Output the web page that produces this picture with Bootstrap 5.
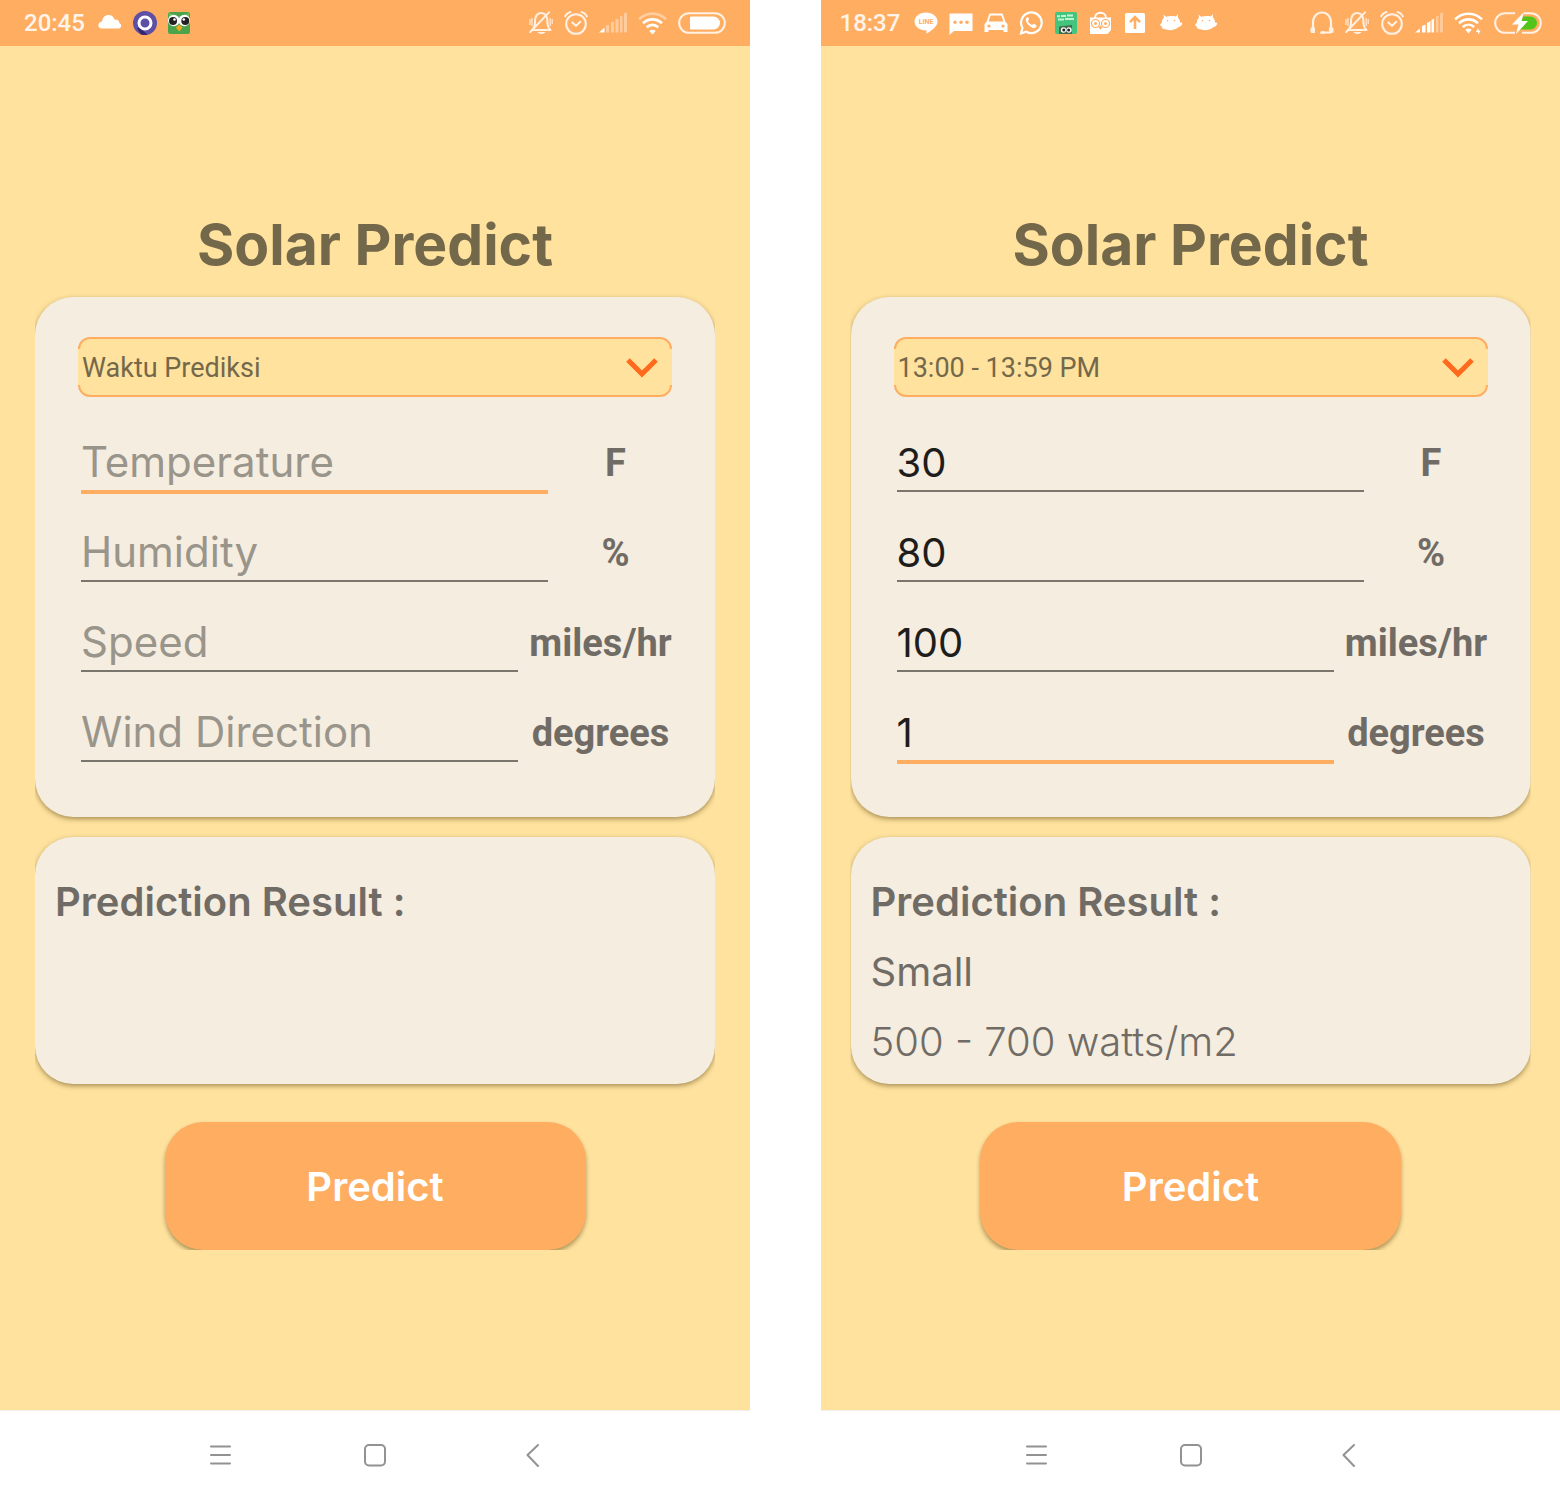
<!DOCTYPE html>
<html lang="id">
<head>
<meta charset="utf-8">
<meta name="viewport" content="width=device-width, initial-scale=1">
<title>Solar Predict</title>
<link href="https://cdn.jsdelivr.net/npm/bootstrap@5.3.0/dist/css/bootstrap.min.css" rel="stylesheet">
<style>
:root{--sun:#ffe29e;--orange:#ffad61;--panel:#f5ede0;--ink:#706c65}
body{background:#fff;font-family:Inter,"Open Sans",sans-serif}
.screens{column-gap:71px}
.phone{flex:739 1 0;min-width:0;background:var(--sun)}
.phone-wide{flex-grow:750}
.statusbar{background:var(--orange);height:46px;color:#fff}
.status-inner{width:100%;max-width:702px}
.status-icons{gap:11px}
.clock{min-width:63px;font:500 24px/28px Roboto,sans-serif;color:#fff4ea}
.app{padding:167px 29px 40px}
.app-title{font-size:57px;line-height:64px;font-weight:700;color:#74684a;margin-bottom:20px}
.panel{width:100%;max-width:680px;background:var(--panel);border-radius:38px;box-shadow:0 2px 5px rgba(80,60,10,.5);clip-path:inset(-4px 0 -10px 0);color:var(--ink)}
.form-panel{padding:40px 43px 53px;margin-bottom:20px}
.picker{margin-bottom:7px}
.picker select{appearance:none;display:block;width:100%;height:60px;border:2px solid var(--orange);border-radius:12px;background:var(--sun);color:#74684a;font:400 27px/32px Roboto,sans-serif;padding:2px 60px 0 2px}
.picker::before,.picker::after{content:"";position:absolute;top:12px;bottom:12px;width:2px;background:var(--sun)}
.picker::before{left:0}
.picker::after{right:0}
.picker svg{position:absolute;right:14px;top:20px;pointer-events:none}
.field{height:90px;padding:34px 0 0 3px;gap:11px}
.field input{flex:1 1 0;min-width:0;height:54px;border:0;border-bottom:2px solid #7a766e;border-radius:0;background:none;padding:0 0 4px;font-size:40px;line-height:48px;color:#1f1d1b;outline:0}
.field input::placeholder{color:#9a958b;opacity:1;font-size:42px}
.field input.active{height:56px;border-bottom:4px solid var(--orange)}
.field label{width:113px;text-align:center;font:700 38px/50px Roboto,sans-serif;white-space:nowrap}
.field.long label{width:143px}
.result-panel{min-height:247px;padding:30px 20px 7px;margin-bottom:38px}
.result-panel h2,.result-panel p{font-size:40px;line-height:70px;margin:0}
.result-panel h2{font-weight:600}
.result-panel .range{font-weight:300}
.predict{width:421px;max-width:100%;height:128px;border:0;border-radius:38px;background:var(--orange);color:#fff;font-size:40px;line-height:48px;font-weight:600;padding-top:3px;box-shadow:0 3px 4px rgba(80,60,10,.45);clip-path:inset(-2px -6px 0 -6px)}
.softkeys{height:90px;gap:132px;background:#fff;border-top:1px solid #f1efec;padding-bottom:2px}
.softkeys button{border:0;background:none;padding:0;line-height:0}
svg{display:block;flex:none}
</style>
</head>
<body>
<svg width="0" height="0" class="position-absolute" aria-hidden="true">
<defs>
<symbol id="bell" viewBox="0 0 24 24"><g fill="none" stroke="#fff1e4" stroke-width="2" stroke-linecap="round" stroke-linejoin="round"><path d="M3 19c2.400-2 3-4 3-8C6 5.500 8 2 12.200 2S18.400 5.500 18.400 11c0 4 .6 6 3.200 8z"/><path d="M1.200 21 20 1.400"/></g><path d="M8.500 21h8c-1 2.500-7 2.500-8 0z" fill="#fff1e4"/><path d="M1 8v6M3 7v8M21.200 7v8M23.300 8v5" stroke="#fff1e4" stroke-width="1.600" opacity=".7"/></symbol>
<symbol id="alarm" viewBox="0 0 24 24"><g fill="none" stroke="#fff1e4" stroke-width="2.100" stroke-linecap="round" stroke-linejoin="round"><circle cx="12" cy="13" r="9.800"/><path d="m8.300 11.400 3.700 3.400 4.300-4"/><path d="M1.200 5.200C2.300 3.200 4 1.800 6.300 1.100M22.800 5.200c-1.100-2-2.800-3.400-5.100-4.100"/></g></symbol>
<symbol id="wifi" viewBox="0 0 29 24"><g fill="none" stroke="#fff" stroke-width="2.600"><path d="M1 8.300C8.500.8 20.500.8 28 8.300"/><path d="M5 12.300c5.400-5.200 13.600-5.200 19 0M8.800 16c3.400-3.100 8-3.100 11.400 0"/></g><path d="M11.300 18.800c2-1.600 4.400-1.600 6.400 0L14.500 22.500z" fill="#fff"/></symbol>
<symbol id="droid" viewBox="0 0 24 24"><path d="M4.500 3.500 7 5.800c3.200-1 6.800-1 9.800-.4L19 3l-.2 3.600c1.600 1.400 2.200 3 2.200 5.200 1.800-1.200 2.800.6 1.700 2.200-.8 1.300-1.900 1.900-3 2-2.400 3-10 4-13.400 2.300C3.500 18 2.500 16.800 2.600 15.200.8 15 .8 12.200 2.800 12.200 2.800 10 3.500 8 5 6.800z" fill="#fff"/><circle cx="8.500" cy="9.800" r=".8" fill="#ffad61"/><circle cx="15.500" cy="9.500" r=".8" fill="#ffad61"/></symbol>
<symbol id="chevron" viewBox="0 0 32 22"><path d="M2 3 16 17 30 3" fill="none" stroke="#ff6a1c" stroke-width="5"/></symbol>
<symbol id="menu" viewBox="0 0 24 24"><path d="M4 3.500h19M4 12h19M4 20.500h19" stroke="#929292" stroke-width="2" stroke-linecap="round"/></symbol>
<symbol id="home" viewBox="0 0 24 24"><rect x="2" y="2" width="20" height="20.500" rx="4" fill="none" stroke="#929292" stroke-width="2"/></symbol>
<symbol id="back" viewBox="0 0 24 24"><path d="M19 2 8.500 12 19 23" fill="none" stroke="#929292" stroke-width="2" stroke-linecap="round" stroke-linejoin="round"/></symbol>
</defs>
</svg>

<div class="screens d-flex min-vh-100">
  <section class="phone phone-wide d-flex flex-column">
    <header class="statusbar d-flex justify-content-center">
      <div class="status-inner d-flex align-items-center justify-content-between">
        <div class="status-icons d-flex align-items-center">
          <span class="clock">20:45</span>
          <svg width="24" height="24"><path d="M4 17.500C-1 17.500-.8 11 4 10.600 4.500 6 7.500 4 10.500 4c3.300 0 5.200 2 6 4.600 3.300-.2 4.800 1.600 5 3.700 2.800 1.200 1.800 5.200-.8 5.200z" fill="#fff"/></svg>
          <svg width="24" height="24"><circle cx="12" cy="12" r="12" fill="#5f4fa5"/><path d="M7 17 14.500 23.800A12 12 0 0 1 8 23.400L4 17z" fill="#33266c"/><circle cx="12" cy="12" r="6" fill="#5f4fa5" stroke="#fff" stroke-width="3"/></svg>
          <svg width="24" height="24"><rect y="1" width="22" height="22" rx="2.500" fill="#4ba34c"/><path d="M1 2 11 6 21 2v4H1z" fill="#6dc061"/><circle cx="5.800" cy="9.500" r="5.800" fill="#fff"/><circle cx="16.300" cy="9.500" r="5.800" fill="#fff"/><circle cx="5" cy="10" r="4" fill="#222"/><circle cx="17.300" cy="10" r="4" fill="#222"/><circle cx="6.500" cy="8.500" r="1.300" fill="#fff"/><circle cx="15.800" cy="8.500" r="1.300" fill="#fff"/><path d="m11.200 13.500 3.300 3-3.300 4-3.300-4z" fill="#f6a51f"/></svg>
        </div>
        <div class="status-icons d-flex align-items-center">
          <svg width="24" height="24"><use href="#bell"/></svg>
          <svg width="24" height="24"><use href="#alarm"/></svg>
          <svg width="28" height="24"><g fill="#fff" opacity=".38"><path d="M7 14h3v7.500H7zM12 11h3v10.500h-3zM16.500 8h3v13.500h-3zM21 5h2.500v16.500H21zM25 2.500 28 1v20.500h-3z"/></g><path d="m0 21.500 5.500-5v5z" fill="#fff"/></svg>
          <svg width="29" height="24"><g fill="none" stroke="#fff" stroke-width="2.800"><path opacity=".4" d="M1 8.300C8.500.8 20.500.8 28 8.300"/><path d="M5 12.300c5.400-5.200 13.600-5.200 19 0M8.800 16.300c3.400-3.100 8-3.100 11.400 0"/></g><path d="M11.300 20c2-1.600 4.400-1.600 6.400 0l-3.200 3.500z" fill="#fff"/></svg>
          <svg width="48" height="24"><rect x="1.200" y="2.200" width="45.600" height="19.600" rx="9.800" fill="none" stroke="#fff1e4" stroke-width="2"/><path d="M13 5.500h22.500a6.500 6.500 0 0 1 0 13H13a1 1 0 0 1-1-1v-11a1 1 0 0 1 1-1z" fill="#fff"/></svg>
        </div>
      </div>
    </header>
    <main class="app flex-grow-1 d-flex flex-column align-items-center">
      <h1 class="app-title">Solar Predict</h1>
      <form class="panel form-panel">
        <div class="picker position-relative">
          <select aria-label="Waktu Prediksi"><option>Waktu Prediksi</option><option>13:00 - 13:59 PM</option></select>
          <svg width="32" height="22"><use href="#chevron"/></svg>
        </div>
        <div class="field d-flex align-items-start"><input class="active" id="t1" type="text" placeholder="Temperature"><label for="t1">F</label></div>
        <div class="field d-flex align-items-start"><input id="h1" type="text" placeholder="Humidity"><label for="h1">%</label></div>
        <div class="field long d-flex align-items-start"><input id="s1" type="text" placeholder="Speed"><label for="s1">miles/hr</label></div>
        <div class="field long d-flex align-items-start"><input id="w1" type="text" placeholder="Wind Direction"><label for="w1">degrees</label></div>
      </form>
      <section class="panel result-panel">
        <h2>Prediction Result :</h2>
      </section>
      <button class="predict" type="button">Predict</button>
    </main>
    <nav class="softkeys d-flex align-items-center justify-content-center">
      <button type="button" aria-label="Menu"><svg width="24" height="24"><use href="#menu"/></svg></button>
      <button type="button" aria-label="Home"><svg width="24" height="24"><use href="#home"/></svg></button>
      <button type="button" aria-label="Back"><svg width="24" height="24"><use href="#back"/></svg></button>
    </nav>
  </section>

  <section class="phone d-flex flex-column">
    <header class="statusbar d-flex justify-content-center">
      <div class="status-inner d-flex align-items-center justify-content-between">
        <div class="status-icons d-flex align-items-center">
          <span class="clock">18:37</span>
          <svg width="24" height="24"><path d="M12 1.500c6.600 0 11.500 4 11.500 9 0 4.500-4.500 8-11 12.300V19.500C5.500 19.500.5 15.500.5 10.500s4.900-9 11.500-9z" fill="#fff"/><text x="12" y="13" text-anchor="middle" font-family="Roboto" font-weight="700" font-size="7" fill="#ffad61">LINE</text></svg>
          <svg width="24" height="24"><path d="M.5 2.500h23v17.500H5L.5 24z" fill="#fff"/><g fill="#ffad61"><circle cx="6" cy="11.200" r="1.700"/><circle cx="12" cy="11.200" r="1.700"/><circle cx="18" cy="11.200" r="1.700"/></g></svg>
          <svg width="24" height="24"><path d="M5.500 2.500h13L21.500 11 23.500 13v8h-4v-2h-15v2h-4v-8L2.500 11z" fill="#fff"/><path d="M6.600 4.500h10.800l2 6H4.600z" fill="#ffad61"/><circle cx="5" cy="15" r="1.600" fill="#ffad61"/><circle cx="19" cy="15" r="1.600" fill="#ffad61"/></svg>
          <svg width="24" height="24"><path d="M2 22.300 3.500 17A10.300 10.300 0 1 1 7.400 20.800z" fill="none" stroke="#fff" stroke-width="2.200"/><path d="M8.500 6c-3 1.500-1.700 5.500 1.300 8.300s6 4 7.500 1.500c.8-1.500 0-1.800-2-2.800-1.200-.6-1.400.8-2.300 1-1.700-.6-3.200-2-4-3.700.2-.9 1.300-1.200.9-2.200C9.400 6.800 9.200 5.800 8.500 6z" fill="#fff"/></svg>
          <svg width="24" height="24"><rect x="1" y="1" width="22" height="22" rx="2" fill="#43c57d"/><path d="M3 5.200h3M7 5h5M13 4.500h6M4 8.500h6M11 8h9" stroke="#c4f3d3" stroke-width="2"/><path d="M5 15.500 18 14v9H5z" fill="#476a4b"/><circle cx="9.500" cy="19" r="2.700" fill="#fff"/><circle cx="15" cy="19" r="2.700" fill="#fff"/><circle cx="9.800" cy="19" r="1.500" fill="#222"/><circle cx="14.700" cy="19" r="1.500" fill="#222"/></svg>
          <svg width="24" height="24"><path d="M1 6.500h21V19l-3.500 4H1z" fill="#fff"/><path d="M6 7c0-7 11-7 11 0" fill="none" stroke="#fff" stroke-width="2"/><g fill="none" stroke="#ffad61" stroke-width="1.200"><circle cx="6.500" cy="12.500" r="4"/><circle cx="16.500" cy="12.500" r="4"/></g><g fill="#ffad61"><circle cx="6.500" cy="12.500" r="1.500"/><circle cx="16.500" cy="12.500" r="1.500"/><path d="m11.500 14.500 2 2-2 2-2-2z"/></g></svg>
          <svg width="24" height="24"><rect x="1" y="2" width="20" height="20" rx="1.500" fill="#fff"/><path d="M11 18V6.500M6 11.200l5-5 5 5" fill="none" stroke="#ffad61" stroke-width="2.600"/></svg>
          <svg width="24" height="24"><use href="#droid"/></svg>
          <svg width="24" height="24"><use href="#droid"/></svg>
        </div>
        <div class="status-icons d-flex align-items-center">
          <svg width="24" height="24"><path d="M3 17V11.500C3 5.500 7 1.500 12 1.500s9 4 9 10V17M13 21.500h8" fill="none" stroke="#fff1e4" stroke-width="2.200"/><path d="M1 16.500h4v5.500H1.500C.3 22 0 18.500 1 16.500zM19 16.500h4c1 2 .7 5.500-.5 5.500H19z" fill="#fff1e4"/><ellipse cx="12.500" cy="21.500" rx="2.500" ry="1.600" fill="#fff1e4"/></svg>
          <svg width="24" height="24"><use href="#bell"/></svg>
          <svg width="24" height="24"><use href="#alarm"/></svg>
          <svg width="28" height="24"><path d="m0 21.500 5-4v4zM7 15l3.500-1.500v8H7zM12 12l3.500-2v11.500H12z" fill="#fff"/><path d="M16.500 9 19 7.500v14h-2.500z" fill="#fff"/><path d="M21 5h2.500v16.500H21zM25 2.500 28 1v20.500h-3z" fill="#fff" opacity=".35"/></svg>
          <svg width="29" height="24"><use href="#wifi"/><path d="m24 17-2 4h3zM24.500 23.500l2-4h-3z" fill="#fff"/></svg>
          <svg width="48" height="24"><path d="M21 2.200H11a9.800 9.800 0 0 0 0 19.600h10M30 2.200h7a9.800 9.800 0 0 1 0 19.600h-9" fill="none" stroke="#fff1e4" stroke-width="2"/><path d="M29 5.500h7.500a6.500 6.500 0 0 1 0 13H25z" fill="#52c41a"/><path d="M30 1 18 13.500h6.500L22 23l12-13h-6.500z" fill="#fff"/></svg>
        </div>
      </div>
    </header>
    <main class="app flex-grow-1 d-flex flex-column align-items-center">
      <h1 class="app-title">Solar Predict</h1>
      <form class="panel form-panel">
        <div class="picker position-relative">
          <select aria-label="Waktu Prediksi"><option>13:00 - 13:59 PM</option><option>Waktu Prediksi</option></select>
          <svg width="32" height="22"><use href="#chevron"/></svg>
        </div>
        <div class="field d-flex align-items-start"><input id="t2" type="text" value="30"><label for="t2">F</label></div>
        <div class="field d-flex align-items-start"><input id="h2" type="text" value="80"><label for="h2">%</label></div>
        <div class="field long d-flex align-items-start"><input id="s2" type="text" value="100"><label for="s2">miles/hr</label></div>
        <div class="field long d-flex align-items-start"><input class="active" id="w2" type="text" value="1"><label for="w2">degrees</label></div>
      </form>
      <section class="panel result-panel">
        <h2>Prediction Result :</h2>
        <p>Small</p>
        <p class="range">500 - 700 watts/m2</p>
      </section>
      <button class="predict" type="button">Predict</button>
    </main>
    <nav class="softkeys d-flex align-items-center justify-content-center">
      <button type="button" aria-label="Menu"><svg width="24" height="24"><use href="#menu"/></svg></button>
      <button type="button" aria-label="Home"><svg width="24" height="24"><use href="#home"/></svg></button>
      <button type="button" aria-label="Back"><svg width="24" height="24"><use href="#back"/></svg></button>
    </nav>
  </section>
</div>
<script src="https://cdn.jsdelivr.net/npm/bootstrap@5.3.0/dist/js/bootstrap.bundle.min.js"></script>
</body>
</html>
